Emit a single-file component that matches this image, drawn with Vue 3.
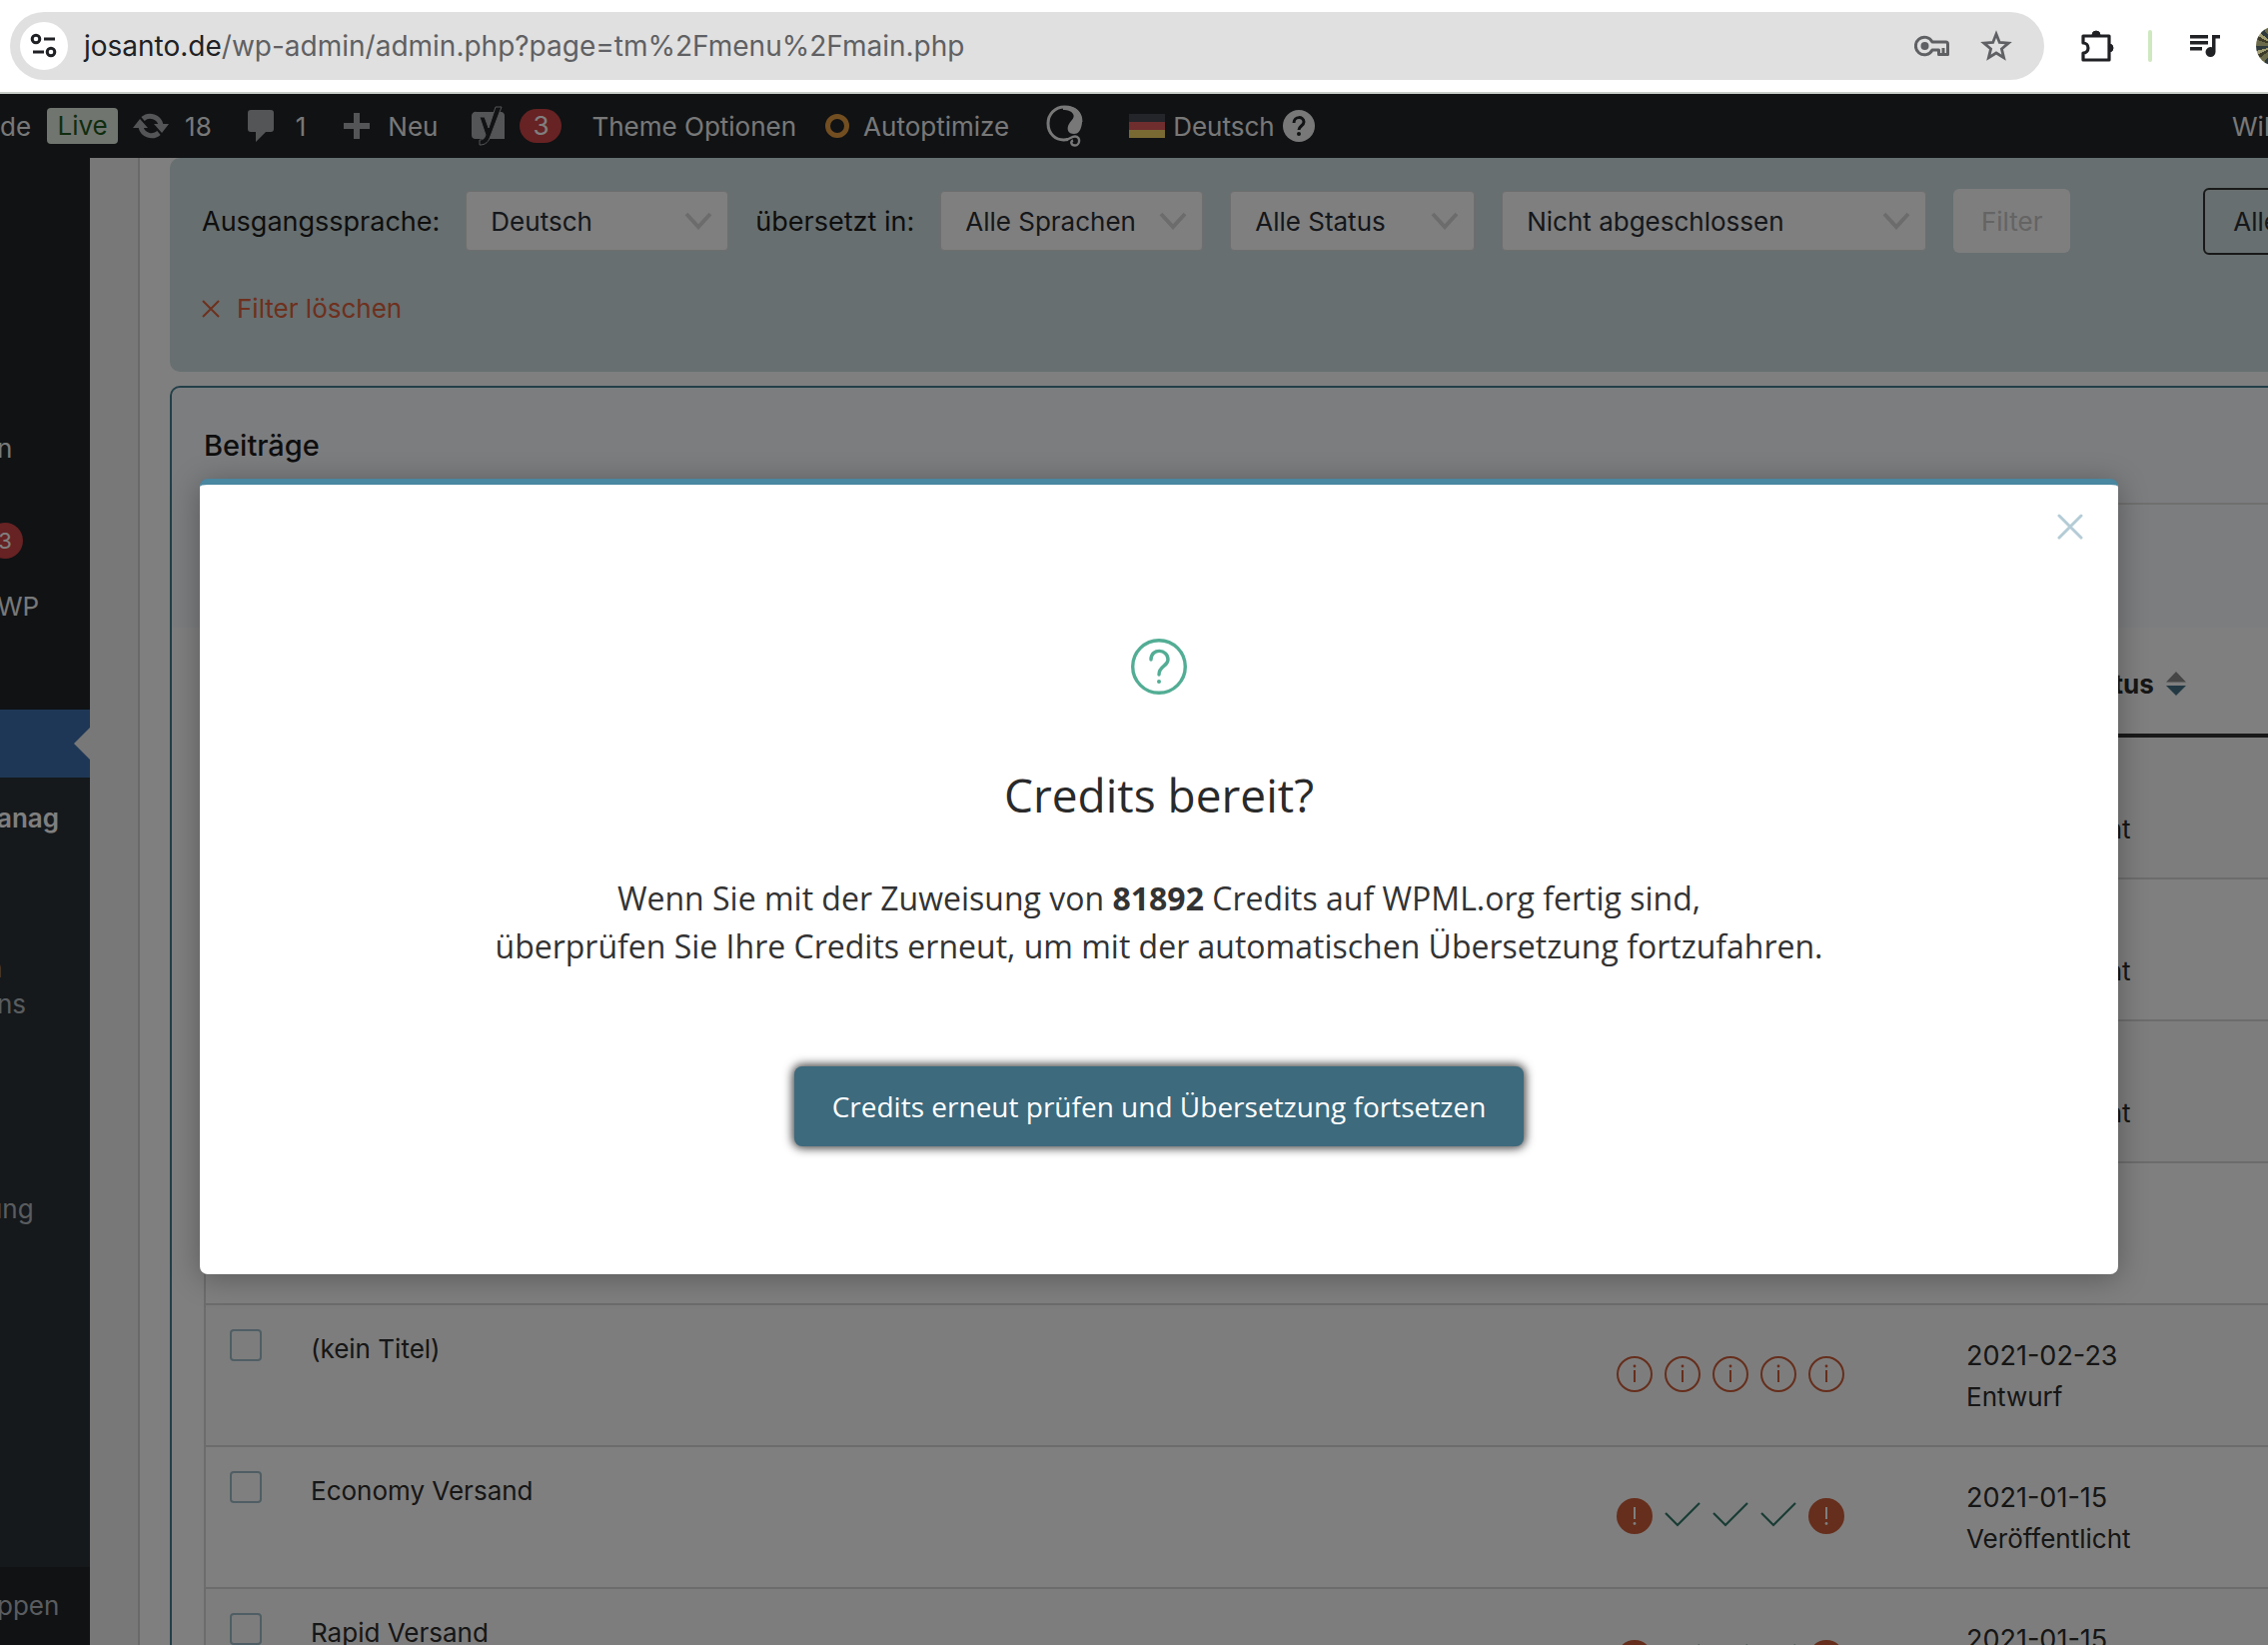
<script setup>
const url = { host: 'josanto.de', path: '/wp-admin/admin.php?page=tm%2Fmenu%2Fmain.php' }

const filters = [
  { id: 'from', label: 'Ausgangssprache:', value: 'Deutsch', size: 'w-lang' },
  { id: 'to', label: 'übersetzt in:', value: 'Alle Sprachen', size: 'w-lang' },
  { id: 'status', aria: 'Status', value: 'Alle Status', size: 'w-status' },
  { id: 'progress', aria: 'Fortschritt', value: 'Nicht abgeschlossen', size: 'w-progress' },
]

const rows = [
  { title: '', icons: [], date: '', state: 'Veröffentlicht' },
  { title: '', icons: [], date: '', state: 'Veröffentlicht' },
  { title: '', icons: [], date: '', state: 'Veröffentlicht' },
  { title: '', icons: [], date: '', state: '' },
  { title: '(kein Titel)', icons: ['info', 'info', 'info', 'info', 'info'], date: '2021-02-23', state: 'Entwurf' },
  { title: 'Economy Versand', icons: ['alert', 'done', 'done', 'done', 'alert'], date: '2021-01-15', state: 'Veröffentlicht' },
  { title: 'Rapid Versand', icons: ['alert', 'done', 'done', 'done', 'alert'], date: '2021-01-15', state: 'Veröffentlicht' },
]
</script>

<template>
  <div class="window">
    <header class="chrome">
      <div class="omnibox">
        <button class="site-info" aria-label="Website-Informationen">
          <svg width="28" height="28" viewBox="0 0 28 28" fill="none" stroke="#202124" stroke-width="3">
            <circle cx="6" cy="7" r="3.8" /><path d="M14 7h11M3 20h11" /><circle cx="21" cy="20" r="3.8" />
          </svg>
        </button>
        <span class="url"><b>{{ url.host }}</b>{{ url.path }}</span>
        <button class="plain" aria-label="Passwörter">
          <svg width="36" height="24" viewBox="0 0 36 24" fill="none" stroke="#5f6063" stroke-width="3">
            <path d="M18 8a8.800 8.800 0 1 0 0 8h6.500v4.500h9V10q0-2-2-2z" stroke-linejoin="round" />
            <path d="M29 14v5" />
            <circle cx="10.500" cy="12" r="4" fill="#5f6063" stroke="none" />
          </svg>
        </button>
        <button class="plain star" aria-label="Lesezeichen">
          <svg width="32" height="32" viewBox="0 0 32 32" fill="none" stroke="#5f6063" stroke-width="2.800">
            <path d="M16 4l3.300 8.400 9 .7-6.900 5.800 2.200 8.800L16 23l-7.600 4.700 2.200-8.800-6.900-5.800 9-.7z" />
          </svg>
        </button>
      </div>
      <button class="plain ext" aria-label="Erweiterungen">
        <svg width="36" height="36" viewBox="0 0 36 36" fill="none" stroke="#202124" stroke-width="3.200">
          <path d="M5 8h26v24H5v-7a5 5 0 0 0 0-10z" stroke-linejoin="round" />
          <path d="M14 7a4 4 0 0 1 8 0zM31 16a4 4 0 0 1 0 8z" fill="#202124" stroke-width="1" />
        </svg>
      </button>
      <i class="divider"></i>
      <button class="plain media" aria-label="Medien">
        <svg width="32" height="26" viewBox="0 0 32 26" fill="#202124">
          <path d="M1 2h18v3.500H1zM1 8h18v3.500H1zM1 14h12v3.500H1zM23 2h8v3.500h-4.500V19a5 5 0 1 1-3.500-4.800z" />
        </svg>
      </button>
      <button class="avatar" aria-label="Profil"></button>
    </header>

    <div class="site">
      <nav class="adminbar">
        <a href="#" class="site-name">de</a>
        <span class="live">Live</span>
        <a href="#" class="item updates">
          <svg width="36" height="32" viewBox="0 0 36 32" fill="none" stroke="#a7aaad" stroke-width="5">
            <path d="M10 9a11 11 0 0 1 18 6M26 23a11 11 0 0 1-18-6" />
            <path d="M0 18l7-9 8 9zM21 14h15l-7 9z" fill="#a7aaad" stroke="none" />
          </svg>18
        </a>
        <a href="#" class="item comments">
          <svg width="26" height="32" viewBox="0 0 26 32"><path d="M3 0h20a3 3 0 0 1 3 3v16a3 3 0 0 1-3 3h-5L8 32V22H3a3 3 0 0 1-3-3V3a3 3 0 0 1 3-3z" fill="#a7aaad" /></svg>1
        </a>
        <a href="#" class="item new">
          <svg width="26" height="26" viewBox="0 0 26 26"><path d="M10 0h6v10h10v6H16v10h-6V16H0v-6h10z" fill="#a7aaad" /></svg>Neu
        </a>
        <a href="#" class="item yoast" aria-label="Yoast SEO">
          <svg width="36" height="42" viewBox="0 0 36 42">
            <path d="M6 7h25a4 4 0 0 1 3 4v23H5a4 4 0 0 1-4-4V11a4 4 0 0 1 5-4z" fill="#a7aaad" />
            <path d="M9 12h5l4 11 7-21h6L20 31c-2 6-5 9-11 9v-5c4 0 5-2 6-5z" fill="#202428" stroke="#a7aaad" stroke-width="1" />
          </svg>
          <span class="badge">3</span>
        </a>
        <a href="#" class="item theme">Theme Optionen</a>
        <a href="#" class="item auto"><i class="ring"></i>Autoptimize</a>
        <a href="#" class="item qlogo" aria-label="Q">
          <svg width="38" height="42" viewBox="0 0 38 42">
            <path d="M22 34.500C9 37 2 28 2 18.500 2 9 9 2 18.500 2 29 2 35 8 35 17" fill="none" stroke="#f0f0f1" stroke-width="3" />
            <path d="M17 1c13-1 20 7 19 17-1 8-4 11-8 11-6 0-8-5-5-10 3-5 6-6 4-10-2-3-5-4-10-4z" fill="#f0f0f1" />
            <path d="M20 34.500c4 0 5-3 9-3 6 0 5 9 0 9-4 0-5-4-2-5" fill="none" stroke="#f0f0f1" stroke-width="2.400" />
          </svg>
        </a>
        <a href="#" class="item lang">
          <svg width="36" height="24" viewBox="0 0 36 24"><path d="M0 0h36v8H0z" fill="#464a54" /><path d="M0 8h36v8H0z" fill="#e05a5c" /><path d="M0 16h36v8H0z" fill="#f2d568" /></svg>
          Deutsch
          <svg width="32" height="32" viewBox="0 0 32 32">
            <circle cx="16" cy="16" r="16" fill="#f0f0f1" />
            <path d="M11 13c0-7 10-7 10-1 0 4-5 4-5 8" fill="none" stroke="#202428" stroke-width="3" /><circle cx="16" cy="24" r="2" fill="#202428" />
          </svg>
        </a>
        <a href="#" class="item account">Wil</a>
      </nav>

      <div class="body">
        <aside class="sidebar">
          <a href="#" class="menu m1">n</a>
          <a href="#" class="menu m2"><span class="badge">3</span></a>
          <a href="#" class="menu m3">WP</a>
          <a href="#" class="current" aria-label="WPML"></a>
          <div class="submenu">
            <a href="#" class="menu active">anag</a>
            <a href="#" class="menu two"><span class="cut">n</span><span>ns</span></a>
            <a href="#" class="menu last"><span class="cut">ung</span></a>
          </div>
          <a href="#" class="menu m4">ppen</a>
        </aside>

        <main class="content">
          <section class="filterbox">
            <div class="frow">
              <template v-for="f in filters" :key="f.id">
                <label v-if="f.label" :for="f.id">{{ f.label }}</label>
                <select :id="f.id" :class="f.size" :aria-label="f.aria"><option>{{ f.value }}</option></select>
              </template>
              <button class="filter" disabled>Filter</button>
              <button class="all">Alle</button>
            </div>
            <a href="#" class="clear">
              <svg width="18" height="18" viewBox="0 0 18 18" stroke="#dc603a" stroke-width="2"><path d="M1 1l16 16M17 1L1 17" /></svg>
              Filter löschen
            </a>
          </section>

          <section class="panel">
            <h2>Beiträge</h2>
            <div class="tools"></div>
            <table>
              <thead>
                <tr>
                  <th class="c-check"></th>
                  <th class="c-title"></th>
                  <th class="c-icons"></th>
                  <th class="c-date">
                    <span class="sort">Datum / Status
                      <svg width="20" height="24" viewBox="0 0 20 24"><path d="M0 10.500L10 0l10 10.500z" fill="#8c8c8c" /><path d="M0 14l10 10 10-10z" fill="#447287" /></svg>
                    </span>
                  </th>
                </tr>
              </thead>
              <tbody>
                <tr v-for="(r, i) in rows" :key="i">
                  <td class="c-check"><input :id="'row' + i" type="checkbox" :aria-label="r.title || 'Beitrag'"></td>
                  <td class="c-title"><label :for="'row' + i">{{ r.title }}</label></td>
                  <td class="c-icons">
                    <div class="icons">
                      <svg v-for="(k, n) in r.icons" :key="n" width="36" height="36" viewBox="0 0 36 36" fill="none">
                        <template v-if="k === 'info'">
                          <circle cx="18" cy="18" r="17" stroke="#cc5c38" stroke-width="2" />
                          <path d="M18 14v12" stroke="#cc5c38" stroke-width="2" /><circle cx="18" cy="10" r="1.400" fill="#cc5c38" />
                        </template>
                        <template v-else-if="k === 'alert'">
                          <circle cx="18" cy="18" r="18" fill="#cc5c38" />
                          <path d="M18 9v12" stroke="#fff" stroke-width="2" /><circle cx="18" cy="25.500" r="1.400" fill="#fff" />
                        </template>
                        <path v-else d="M1 15l12 12L35 5" stroke="#33796b" stroke-width="2.200" />
                      </svg>
                    </div>
                  </td>
                  <td class="c-date"><div class="date">{{ r.date }}</div><div>{{ r.state }}</div></td>
                </tr>
              </tbody>
            </table>
          </section>
        </main>
      </div>

      <div class="overlay">
        <div class="modal" role="dialog" aria-labelledby="dlg-title">
          <button class="close" aria-label="Schließen">
            <svg width="26" height="26" viewBox="0 0 26 26" stroke="#b4ccd6" stroke-width="3" stroke-linecap="round"><path d="M2 2l22 22M24 2L2 24" /></svg>
          </button>
          <svg class="question" width="56" height="56" viewBox="0 0 56 56" fill="none" stroke="#52ad94" stroke-linecap="round">
            <circle cx="28" cy="28" r="26.300" stroke-width="3.400" />
            <path d="M20 21c0-12 17-11 17 0 0 7-9 6-9 15" stroke-width="3.400" /><circle cx="28" cy="43" r="2" fill="#52ad94" stroke="none" />
          </svg>
          <h1 id="dlg-title">Credits bereit?</h1>
          <p>Wenn Sie mit der Zuweisung von <strong>81892</strong> Credits auf WPML.org fertig sind,<br>überprüfen Sie Ihre Credits erneut, um mit der automatischen Übersetzung fortzufahren.</p>
          <button class="primary">Credits erneut prüfen und Übersetzung fortsetzen</button>
        </div>
      </div>
    </div>
  </div>
</template>

<style>
body { overflow: hidden; }
</style>

<style scoped>
* { box-sizing: border-box; }
.window { font-family: Inter, "Liberation Sans", sans-serif; height: 100vh; display: flex; flex-direction: column; overflow: hidden; background: #fff; font-size: 26px; color: #2c2c2c; }
button { font-family: inherit; border: 0; padding: 0; background: none; }
a { color: inherit; text-decoration: none; }
svg { display: block; flex: none; }

.chrome { flex: none; height: 94px; display: flex; align-items: center; padding-left: 10px; border-bottom: 2px solid #c9cdca; overflow: hidden; }
.omnibox { flex: 1; display: flex; align-items: center; height: 68px; padding: 0 32px 0 10px; border-radius: 34px; background: #e0e0e0; }
.site-info { width: 48px; height: 48px; border-radius: 50%; background: #fff; display: flex; align-items: center; justify-content: center; margin-right: 16px; }
.url { flex: 1; font-size: 28px; color: #5f6063; }
.url b { font-weight: 400; color: #202124; }
.plain { display: flex; flex: none; }
.star { margin-left: 30px; }
.ext { margin-left: 34px; }
.divider { width: 4px; height: 32px; border-radius: 2px; background: #cfe8c0; margin-left: 34px; }
.media { margin-left: 37px; }
.avatar { flex: none; width: 40px; height: 40px; border-radius: 50%; margin: 0 -28px 0 35px; background: repeating-conic-gradient(#6b6a4a 0 5%, #3c3a28 0 8%, #a09c72 0 11%, #2f3a3c 0 15%); }

.site { flex: 1; min-height: 0; position: relative; display: flex; flex-direction: column; background: #f0f0f1; }
.adminbar { flex: none; height: 64px; display: flex; align-items: center; background: #202428; color: #f0f0f1; overflow: hidden; white-space: nowrap; }
.live { margin-left: 16px; width: 71px; height: 36px; line-height: 36px; text-align: center; border-radius: 4px; background: #e2ebdf; color: #1e5a1e; }
.item { display: flex; align-items: center; }
.badge { min-width: 42px; height: 34px; line-height: 34px; text-align: center; border-radius: 18px; background: #cf4546; color: #fff; }
.updates { margin-left: 15px; gap: 16px; }
.comments { margin-left: 36px; gap: 22px; }
.new { margin-left: 38px; gap: 18px; }
.yoast { margin-left: 33px; gap: 13px; }
.theme { margin-left: 30px; }
.auto { margin-left: 29px; gap: 14px; }
.ring { width: 24px; height: 24px; border: 5px solid #e69d42; border-radius: 50%; }
.qlogo { margin-left: 37px; }
.lang { margin-left: 45px; gap: 8px; }
.account { margin-left: auto; width: 36px; }

.body { flex: 1; min-height: 0; display: flex; overflow: hidden; }
.sidebar { flex: none; width: 90px; background: #202428; color: #f0f0f1; overflow: hidden; display: flex; flex-direction: column; }
.menu { display: block; flex: none; margin-left: -3px; line-height: 36px; }
.cut { display: block; margin-left: -10px; }
.m1 { padding-top: 273px; }
.m2 { padding-top: 56px; }
.m2 .badge { display: block; min-width: 0; width: 36px; height: 36px; line-height: 36px; margin-left: -10px; font-size: 22px; }
.m3 { padding-top: 30px; }
.current { flex: none; height: 68px; margin-top: 85px; background: #3c6fad; position: relative; }
.current::after { content: ""; position: absolute; right: 0; top: 18px; border: 16px solid transparent; border-left: 0; border-right-color: #f0f0f1; }
.submenu { flex: none; background: #2a3238; color: #b4b9be; height: 790px; }
.active { padding-top: 23px; font-weight: 600; color: #fff; }
.two { padding-top: 114px; }
.last { padding-top: 169px; }
.m4 { padding-top: 21px; color: #b4b9be; }

.content { flex: 1; min-width: 0; margin-left: 48px; padding-left: 30px; border-left: 2px solid #d2d2d2; background: #fff; }
.filterbox { height: 214px; background: #cfdfe1; border-radius: 10px 0 0 10px; padding: 31px 0 0 32px; color: #1c1c1c; }
.frow { display: flex; align-items: center; height: 64px; }
.frow label { margin-right: 26px; white-space: nowrap; font-size: 27px; }
select { appearance: none; flex: none; height: 60px; margin-right: 27px; padding: 0 24px; border: 1px solid #dcdcdc; border-radius: 4px; font: inherit; color: #2a2f36;
  background: #fff url("data:image/svg+xml,%3Csvg xmlns='http://www.w3.org/2000/svg' width='28' height='18' fill='none' stroke='%23d8d8d8' stroke-width='4'%3E%3Cpath d='M2 2l12 13L26 2'/%3E%3C/svg%3E") no-repeat right 15px center; }
.w-lang { width: 263px; }
.w-status { width: 245px; }
.w-progress { width: 425px; }
.filter { flex: none; width: 117px; height: 64px; border-radius: 6px; background: #fdfdfd; color: #c8c8c8; font-size: 26px; }
.all { flex: none; width: 160px; height: 67px; margin-left: 133px; border: 2px solid #333; border-radius: 6px; font-size: 26px; color: #2a2f36; text-align: left; padding-left: 28px; }
.clear { display: flex; align-items: center; gap: 17px; margin-top: 39px; line-height: 34px; color: #dc603a; width: 240px; }

.panel { margin-top: 14px; border: 2px solid #447f91; border-right: 0; border-radius: 10px 0 0 0; }
h2 { margin: 0; height: 115px; padding-left: 32px; line-height: 116px; font-size: 29px; font-weight: 500; color: #1c1c1c; background: #f9fafe; border-radius: 10px 0 0 0; }
.tools { height: 125px; margin-left: 32px; border-top: 2px solid #dedede; box-shadow: -32px 0 0 #f9fafe; background: #f9fafe; }
table { width: calc(100% - 32px); margin-left: 32px; border-collapse: separate; border-spacing: 0; table-layout: fixed; border-left: 2px solid #d8d8d8; }
th { height: 110px; padding: 6px 0 0; border-bottom: 4px solid #333; text-align: left; vertical-align: middle; }
td { height: 142px; padding: 0; border-bottom: 2px solid #d8d8d8; vertical-align: top; }
tbody tr:nth-child(odd) { background: #fbfbfb; }
.c-check { width: 105px; }
.c-icons { width: 350px; }
.c-date { width: 302px; }
td.c-check { padding: 24px 0 0 24px; }
input { appearance: none; display: block; width: 32px; height: 32px; margin: 0; border: 2px solid #9fbcc8; border-radius: 4px; }
td.c-title { padding-top: 25px; line-height: 38px; }
td.c-icons { padding-top: 51px; }
.icons { display: flex; gap: 12px; }
td.c-date { padding-top: 30px; line-height: 41px; }
td.c-date div { min-height: 41px; }
td.c-date .date { font-size: 27px; }
.sort { display: flex; align-items: center; gap: 12px; font-weight: 700; white-space: nowrap; }

.overlay { position: absolute; inset: 0; padding: 385px 150px 0 200px; background: rgba(0, 0, 0, .5); font-family: "Open Sans", "Noto Sans", sans-serif; }
.modal { position: relative; display: flex; flex-direction: column; align-items: center; min-height: 796px; padding-top: 154px; border-top: 6px solid #4a87a0; border-radius: 8px; background: #fff; box-shadow: 0 4px 30px rgba(0, 0, 0, .3); text-align: center; }
.close { position: absolute; top: 29px; right: 35px; }
h1 { margin: 68px 0 0; font-size: 46px; line-height: 64px; font-weight: 400; color: #2a2a2a; }
p { margin: 48px 0 0; font-size: 32px; line-height: 48px; color: #333; }
.primary { margin-top: 96px; width: 730px; height: 80px; border-radius: 8px; background: #3d6a7d; color: #fff; font-size: 28px; box-shadow: 0 0 10px 2px rgba(0, 0, 0, .75); }
</style>
